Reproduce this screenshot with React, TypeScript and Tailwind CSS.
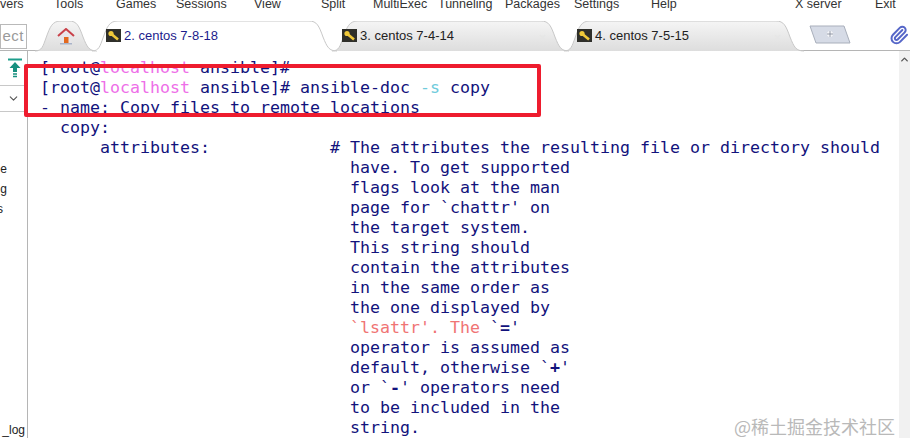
import { ChevronDown, ChevronUp, Paperclip } from 'lucide-react'
import type { ReactNode } from 'react'

const menus = [
  { label: 'vers', className: 'w-[54px]' },
  { label: 'Tools', className: 'w-[62px]' },
  { label: 'Games', className: 'w-[60px]' },
  { label: 'Sessions', className: 'w-[78px]' },
  { label: 'View', className: 'w-[67px]' },
  { label: 'Split', className: 'w-[52px]' },
  { label: 'MultiExec', className: 'w-[65px]' },
  { label: 'Tunneling', className: 'w-[67px]' },
  { label: 'Packages', className: 'w-[69px]' },
  { label: 'Settings', className: 'w-[77px]' },
  { label: 'Help', className: 'w-[144px]' },
  { label: 'X server', className: 'w-[80px]' },
  { label: 'Exit', className: 'w-[35px]' },
]

function KeyIcon() {
  return (
    <svg width="15" height="14" viewBox="0 0 15 14" className="shrink-0">
      <rect width="15" height="13" fill="#2f2f2a" />
      <circle cx="5" cy="4.5" r="2.6" fill="#f0c93a" />
      <path d="M6 5.5 L12 10.5" stroke="#f0c93a" strokeWidth="2.6" />
    </svg>
  )
}

function HomeIcon() {
  return (
    <svg width="18" height="17" viewBox="0 0 18 17">
      <path d="M1 8 L9 1 L17 8" fill="none" stroke="#c9414a" strokeWidth="2" />
      <path d="M3.5 8 L9 3.5 L14.5 8 V16 H3.5 Z" fill="#e8e6ea" />
      <rect x="7" y="9" width="4.5" height="7" fill="#e2691f" />
      <rect x="3" y="15" width="12" height="1.5" fill="#a9b4c9" />
    </svg>
  )
}

function Tab({ width, active, className, children }: { width: number; active?: boolean; className?: string; children: ReactNode }) {
  const d = `M0 30 C7 30 8 25 11 17 C15 6 17 0 26 0 L${width - 28} 0 C${width - 20} 0 ${width - 18} 5 ${width - 14} 16 C${width - 10} 26 ${width - 8} 30 ${width} 30`
  return (
    <div className={`relative h-[30px] shrink-0 ${className ?? ''}`} style={{ width }}>
      <svg width={width} height="31" className="absolute left-0 top-0">
        <defs>
          <linearGradient id="tabfill" x1="0" y1="0" x2="0" y2="1">
            <stop offset="0" stopColor="#f5f5f5" />
            <stop offset="1" stopColor="#dddddd" />
          </linearGradient>
        </defs>
        <path d={d} fill={active ? '#ffffff' : 'url(#tabfill)'} stroke="#c8c8c8" strokeWidth="1" />
      </svg>
      <div className="relative flex h-full items-center">{children}</div>
    </div>
  )
}

function SessionTab({ label, width, keyMargin, className }: { label: string; width: number; keyMargin: string; className: string }) {
  return (
    <Tab width={width} className={className}>
      <div className={`flex items-center gap-[3px] text-[13px] text-[#222222] ${keyMargin}`}>
        <KeyIcon />
        <span>{label}</span>
      </div>
      <span className="absolute right-[23px] top-[8px] text-[12px] text-[#e6e6e6]">×</span>
    </Tab>
  )
}

function Line({ children, className }: { children?: ReactNode; className?: string }) {
  return <div className={`h-[20px] whitespace-pre ${className ?? ''}`}>{children}</div>
}

const Pink = ({ children }: { children: ReactNode }) => <span className="text-[#ee6fe8]">{children}</span>

const docLines = [
  'to be included in the',
  'string.',
]

export default function App() {
  return (
    <div className="relative flex h-[438px] w-[910px] flex-col overflow-hidden bg-white font-['Liberation_Sans',sans-serif]">
      <div className="flex h-[17px] shrink-0 items-start overflow-hidden text-[12.5px] leading-[8px] text-[#333333]">
        {menus.map(m => (
          <span key={m.label} className={`shrink-0 whitespace-pre ${m.className}`}>{m.label}</span>
        ))}
      </div>

      <div className="flex h-[34px] shrink-0 items-end border-b border-[#b5b5b5]">
        <div className="mb-[1px] flex h-[25px] w-[27px] shrink-0 items-center justify-end border border-[#b9b9b9] pr-[2px] text-[15px] tracking-[0.5px] text-[#9a9a9a]">
          ect
        </div>
        <Tab width={62} className="z-0 ml-[8px] -mb-[1px]">
          <div className="ml-[22px]"><HomeIcon /></div>
        </Tab>
        <Tab width={245} active className="z-20 -ml-[5px] -mb-[1px]">
          <div className="ml-[14px] flex items-center gap-[3px] text-[13px] text-[#1c1c8c]">
            <KeyIcon />
            <span>2. centos 7-8-18</span>
          </div>
        </Tab>
        <SessionTab label="3. centos 7-4-14" width={237} keyMargin="ml-[10px]" className="z-10 -ml-[5px] -mb-[1px]" />
        <SessionTab label="4. centos 7-5-15" width={240} keyMargin="ml-[13px]" className="z-0 -ml-[5px] -mb-[1px]" />
        <svg width="42" height="19" viewBox="0 0 42 19" className="mb-[6px] ml-[5px] shrink-0">
          <path d="M1 1 H35 L41 18 H7 Z" fill="#d6dbe6" stroke="#a9afbb" strokeLinejoin="round" />
          <path d="M18 9 h6 M21 6 v6" stroke="#ffffff" strokeWidth="3" />
          <path d="M18 9 h6 M21 6 v6" stroke="#8c93a3" strokeWidth="1" />
        </svg>
        <Paperclip size={20} strokeWidth={2.4} className="mb-[5px] ml-[38px] shrink-0 text-[#5566c8]" />
      </div>

      <div className="flex min-h-0 flex-1">
        <div className="flex w-[28px] shrink-0 flex-col items-end overflow-hidden border-r border-[#b5b5b5] text-[12px] text-[#222222]">
          <div className="flex h-[35px] w-full shrink-0 items-center justify-center border-b border-[#c8c8c8]">
            <svg width="16" height="20" viewBox="0 0 16 20" className="ml-[2px]">
              <path d="M1 1.5 H15" stroke="#1f9e8c" strokeWidth="2" />
              <path d="M8 4 L13.5 10 H10 V14 H6 V10 H2.5 Z" fill="#17907f" />
              <path d="M6 16 H10 M6 18.5 H10" stroke="#17907f" strokeWidth="1.5" />
            </svg>
          </div>
          <div className="flex h-[26px] w-full shrink-0 items-center justify-center border-b border-[#c8c8c8]">
            <ChevronDown size={13} className="text-[#555555]" />
          </div>
          <div className="mt-[47px] flex w-full flex-1 flex-col items-end">
            <div className="relative h-[20px] w-full"><span className="pointer-events-none absolute right-[20px] whitespace-pre leading-[20px]">e</span></div>
            <div className="relative h-[20px] w-full"><span className="absolute right-[20px] whitespace-pre leading-[20px]">g</span></div>
            <div className="relative h-[20px] w-full"><span className="absolute right-[24px] whitespace-pre leading-[20px]">s</span></div>
            <div className="mt-auto mb-[1px] mr-[2px] whitespace-pre text-[12px] leading-[14px]">_log</div>
          </div>
        </div>

        <div className="min-w-0 flex-1 overflow-hidden pl-[12px] pt-[7px] font-['DejaVu_Sans_Mono',monospace] text-[16.63px] leading-[20px] text-[#12127c]">
          <Line>[root@<Pink>localhost</Pink> ansible]#</Line>
          <Line>[root@<Pink>localhost</Pink> ansible]# ansible-doc <span className="text-[#6fcbdc]">-s</span> copy</Line>
          <Line>- name: Copy files to remote locations</Line>
          <Line>{'  copy:'}</Line>
          <Line>{'      attributes:            # The attributes the resulting file or directory should'}</Line>
          <Line>{'                               have. To get supported'}</Line>
          <Line>{'                               flags look at the man'}</Line>
          <Line>{"                               page for `chattr' on"}</Line>
          <Line>{'                               the target system.'}</Line>
          <Line>{'                               This string should'}</Line>
          <Line>{'                               contain the attributes'}</Line>
          <Line>{'                               in the same order as'}</Line>
          <Line>{'                               the one displayed by'}</Line>
          <Line>
            {'                               '}
            <span className="text-[#f07474]">`lsattr'. The </span>`<span className="font-bold">=</span>'
          </Line>
          <Line>{'                               operator is assumed as'}</Line>
          <Line>
            {'                               default, otherwise `'}
            <span className="font-bold">+</span>'
          </Line>
          <Line>
            {'                               or `'}
            <span className="font-bold">-</span>
            {"' operators need"}
          </Line>
          {docLines.map(l => (
            <Line key={l}>{'                               ' + l}</Line>
          ))}
        </div>

        <div className="flex w-[11px] shrink-0 flex-col items-center bg-[#f1f1f1] pt-[3px]">
          <ChevronUp size={11} strokeWidth={3} className="text-[#555555]" />
        </div>
      </div>

      <div className="absolute left-[24px] top-[64px] h-[53px] w-[517px] rounded-[2px] border-4 border-[#ee1c2e]" />
      <div className="absolute left-[734px] top-[416px] whitespace-pre font-['Noto_Sans_CJK_SC','Liberation_Sans',sans-serif] text-[18px] leading-[20px] text-[#b9b9b9]">
        @稀土掘金技术社区
      </div>
    </div>
  )
}
